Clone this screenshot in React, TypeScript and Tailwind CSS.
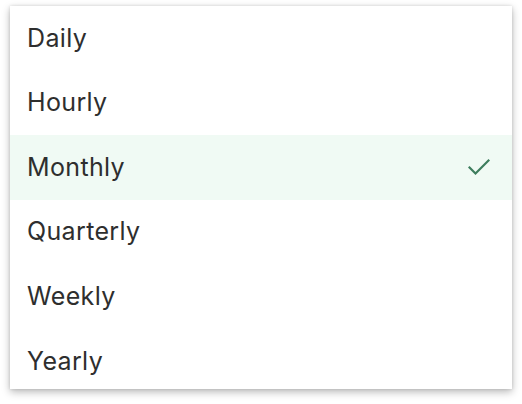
import React from "react";

const items = ["Daily", "Hourly", "Monthly", "Quarterly", "Weekly", "Yearly"];

export default function App() {
  return (
    <div className="w-[522px] h-[404px] bg-white pt-[6px] pl-[10px]" style={{ fontFamily: "Inter, 'Noto Sans', sans-serif" }}>
      <div className="w-[502px] h-[383px] overflow-hidden bg-white shadow-[0_3px_8px_rgba(0,0,0,0.28),0_0_3px_rgba(0,0,0,0.12)] flex flex-col">
        {items.map((it) => {
          const sel = it === "Monthly";
          return (
            <div
              key={it}
              className={`h-[64.6px] shrink-0 flex items-center justify-between pl-[17px] pr-[22px] text-[25px] tracking-[0.35px] text-[#2e2e2e] ${sel ? "bg-[#f0faf4]" : ""}`}
            >
              <span>{it}</span>
              {sel && (
                <svg width="22" height="18" viewBox="0 0 22 18" fill="none">
                  <path d="M1.5 9.5 L7.5 15.5 L20.5 2.5" stroke="#3d7d5d" strokeWidth="2.2" strokeLinecap="square" />
                </svg>
              )}
            </div>
          );
        })}
      </div>
    </div>
  );
}
